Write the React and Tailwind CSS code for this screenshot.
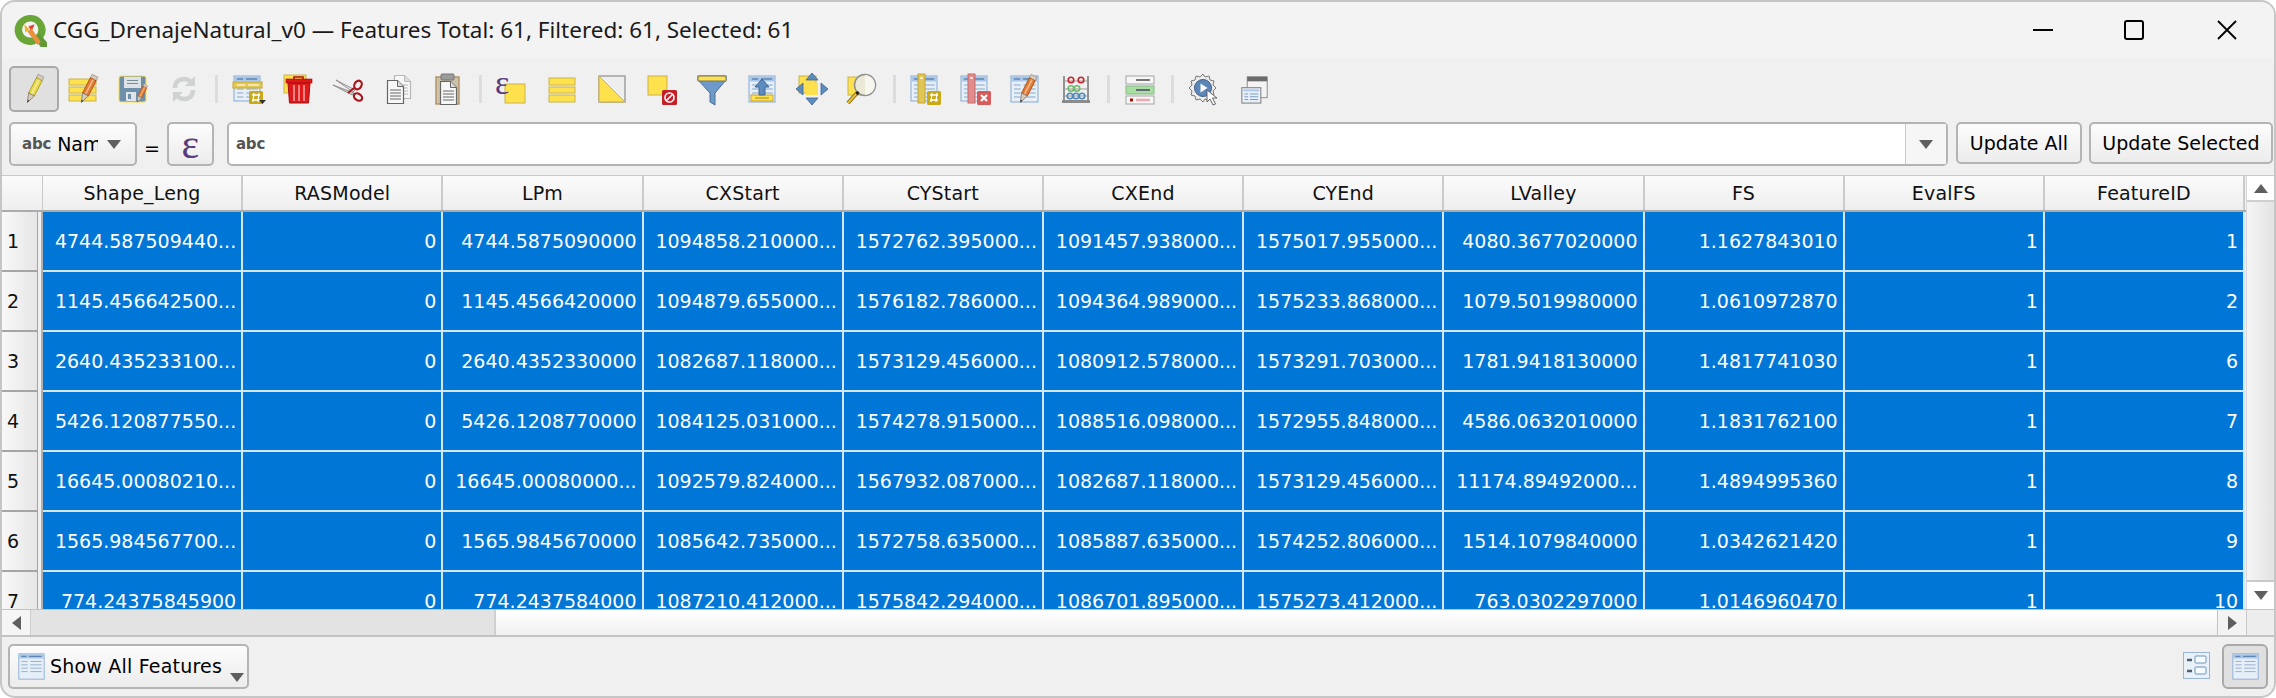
import React from 'react';

const COLUMNS = ['Shape_Leng', 'RASModel', 'LPm', 'CXStart', 'CYStart', 'CXEnd', 'CYEnd', 'LValley', 'FS', 'EvalFS', 'FeatureID'];

const ROWS = [
  ['4744.587509440...', '0', '4744.5875090000', '1094858.210000...', '1572762.395000...', '1091457.938000...', '1575017.955000...', '4080.3677020000', '1.1627843010', '1', '1'],
  ['1145.456642500...', '0', '1145.4566420000', '1094879.655000...', '1576182.786000...', '1094364.989000...', '1575233.868000...', '1079.5019980000', '1.0610972870', '1', '2'],
  ['2640.435233100...', '0', '2640.4352330000', '1082687.118000...', '1573129.456000...', '1080912.578000...', '1573291.703000...', '1781.9418130000', '1.4817741030', '1', '6'],
  ['5426.120877550...', '0', '5426.1208770000', '1084125.031000...', '1574278.915000...', '1088516.098000...', '1572955.848000...', '4586.0632010000', '1.1831762100', '1', '7'],
  ['16645.00080210...', '0', '16645.00080000...', '1092579.824000...', '1567932.087000...', '1082687.118000...', '1573129.456000...', '11174.89492000...', '1.4894995360', '1', '8'],
  ['1565.984567700...', '0', '1565.9845670000', '1085642.735000...', '1572758.635000...', '1085887.635000...', '1574252.806000...', '1514.1079840000', '1.0342621420', '1', '9'],
  ['774.24375845900', '0', '774.2437584000', '1087210.412000...', '1575842.294000...', '1086701.895000...', '1575273.412000...', '763.0302297000', '1.0146960470', '1', '10'],
];

const Svg = ({ children, size = 32 }) => (
  <svg width={size} height={size} viewBox="0 0 32 32" fill="none" overflow="visible">{children}</svg>
);

const PencilShape = ({ body = '#e8d84a', dark = '#a89a20', x = 0, y = 0, scale = 1 }) => (
  <g transform={`translate(${x} ${y}) scale(${scale}) rotate(27 16 16)`}>
    <rect x="13" y="1" width="6.5" height="4" fill="#d9c9b8" stroke="#8a8a8a" strokeWidth=".6" />
    <rect x="13" y="5" width="6.5" height="17" fill={body} stroke={dark} strokeWidth=".8" />
    <rect x="15.4" y="5" width="1.6" height="17" fill="#fff" opacity=".45" />
    <path d="M13 22h6.5L16.2 31z" fill="#d8cbb5" stroke="#777" strokeWidth=".7" />
    <path d="M15.3 28.5h1.9l-1 2.5z" fill="#333" />
  </g>
);

const YellowBox = ({ x, y, w, h }) => (
  <rect x={x} y={y} width={w} height={h} fill="#ffe14e" stroke="#c8b34d" strokeWidth="1" />
);

const TableShape = ({ x = 3, y = 3, w = 25, h = 26 }) => (
  <g>
    <rect x={x} y={y} width={w} height={h} fill="#e6eff8" stroke="#86a9d0" strokeWidth="1" />
    <rect x={x + 0.5} y={y + 0.5} width={w - 1} height={5} fill="#a9c6e6" />
    <path d={`M${x + 3} ${y + 3}h6M${x + 12} ${y + 3}h${w - 15}`} stroke="#5d86b5" strokeWidth="1.4" />
    {[9, 13, 17, 21].map((d) => (
      <path key={d} d={`M${x + 3} ${y + d}h${w * 0.25}M${x + 3 + w * 0.35} ${y + d}h${w * 0.45}`} stroke="#8aa9c9" strokeWidth="1" />
    ))}
  </g>
);

const ToggleEdit = () => (
  <Svg>
    <PencilShape x={0} y={0} />
  </Svg>
);

const MultiEdit = () => (
  <Svg>
    <YellowBox x={1} y={6} w={27} h={6} />
    <YellowBox x={1} y={14} w={27} h={6} />
    <YellowBox x={1} y={22} w={27} h={6} />
    <PencilShape body="#e47b32" dark="#a64e14" x={4} y={0} />
  </Svg>
);

const SaveEdits = () => (
  <Svg>
    <rect x="1" y="3" width="27" height="26" rx="2" fill="#6d8fa9" stroke="#ffe14e" strokeWidth="1" />
    <rect x="6" y="4" width="17" height="11" fill="#dde2e6" />
    <path d="M9 7.5h11M9 10.5h11" stroke="#7a8a96" strokeWidth="1.2" />
    <rect x="8" y="19" width="10" height="9" fill="#dfe4e8" />
    <rect x="10" y="21" width="3" height="5" fill="#6d8fa9" />
    <PencilShape body="#e47b32" dark="#a64e14" x={13} y={10} scale={0.65} />
  </Svg>
);

const Reload = () => (
  <Svg>
    <g stroke="#cfd2d2" strokeWidth="4.5" fill="none">
      <path d="M7 15c0-6 4-9 9-9 3 0 5 1 7 3" />
      <path d="M25 17c0 6-4 9-9 9-3 0-5-1-7-3" />
    </g>
    <path d="M27 3v10H17z" fill="#cfd2d2" />
    <path d="M5 29V19h10z" fill="#cfd2d2" />
  </Svg>
);

const AddFeature = () => (
  <Svg>
    <TableShape x={2} y={3} w={26} h={25} />
    <rect x={1} y={9} width={29} height={6} fill="#e5c955" stroke="#c2a534" strokeWidth="1" />
    <path d="M5 12h8M16 12h11" stroke="#fff" strokeWidth="1.2" />
    <rect x="17" y="18" width="14" height="13" rx="1.5" fill="#c8a91a" />
    <path d="M20 22h8M20 27h8M22 20l-1 9M27 20l-1 9" stroke="#fff" strokeWidth="1.3" />
    <path d="M27 27h7l-3.500 4z" fill="#333" />
  </Svg>
);

const Trash = () => (
  <Svg>
    <rect x="2" y="2" width="22" height="18" fill="#ffe14e" stroke="#c8b34d" />
    <path d="M12 4h9v3h-9z" stroke="#b01010" strokeWidth="1.6" />
    <rect x="4" y="6" width="26" height="4" fill="#e21616" stroke="#a50f0f" strokeWidth=".6" />
    <path d="M6 10h22l-1.500 20H7.500z" fill="#e0191b" stroke="#a50f0f" />
    <path d="M12 12v16M17 12v16M22 12v16" stroke="#f2a0a0" strokeWidth="1.600" />
  </Svg>
);

const Scissors = () => (
  <Svg>
    <path d="M1 12l21 8-2 2z" fill="#cfcfcf" stroke="#7f7f7f" strokeWidth=".8" />
    <path d="M4 7l17 12 2-2z" fill="#e6e6e6" stroke="#7f7f7f" strokeWidth=".8" />
    <ellipse cx="26" cy="12" rx="3.500" ry="4.500" stroke="#a8161c" strokeWidth="2.200" transform="rotate(30 26 12)" />
    <ellipse cx="26" cy="24" rx="4.500" ry="3.200" stroke="#a8161c" strokeWidth="2.200" transform="rotate(35 26 24)" />
    <path d="M16 20l6-5" stroke="#a8161c" strokeWidth="2" />
  </Svg>
);

const PageShape = ({ x, y, stroke = '#666', fill = '#f7f7f7' }) => (
  <g transform={`translate(${x} ${y})`}>
    <path d="M.5.5h10l6 6v17H.5z" fill={fill} stroke={stroke} strokeWidth="1.200" />
    <path d="M10.500.5v6h6" fill="#ddd" stroke={stroke} strokeWidth="1" />
    <path d="M3 10h11M3 13h11M3 16h11M3 19h11" stroke={stroke} strokeWidth="1" />
  </g>
);

const Copy = () => (
  <Svg>
    <PageShape x={12} y={2} stroke="#b8b8b8" />
    <PageShape x={5} y={7} />
  </Svg>
);

const Paste = () => (
  <Svg>
    <rect x="4" y="4" width="23" height="27" fill="#cfc2ab" stroke="#b09060" strokeWidth="1.400" />
    <PageShape x={8} y={8} />
    <rect x="9" y="1" width="13" height="6" rx="1" fill="#9a9a9a" stroke="#777" />
  </Svg>
);

const SelectExpr = () => (
  <Svg>
    <YellowBox x={9} y={11} w={20} h={19} />
    <text x="-1" y="21" fontFamily="'Liberation Serif', serif" fontSize="34" fill="#5b3a7e">&#949;</text>
  </Svg>
);

const SelectAll = () => (
  <Svg>
    <YellowBox x={3} y={5} w={26} h={7} />
    <YellowBox x={3} y={14} w={26} h={6} />
    <YellowBox x={3} y={22} w={26} h={7} />
  </Svg>
);

const Invert = () => (
  <Svg>
    <rect x="3" y="3" width="26" height="26" fill="#eeeeee" stroke="#9b9b9b" strokeWidth="1.400" />
    <path d="M3 3l26 26H3z" fill="#ffe14e" stroke="#c8b34d" />
  </Svg>
);

const Deselect = () => (
  <Svg>
    <YellowBox x={2} y={3} w={19} h={19} />
    <rect x="16" y="17" width="15" height="15" rx="1.500" fill="#c4202a" />
    <circle cx="23.500" cy="24.500" r="4.500" stroke="#fff" strokeWidth="1.600" />
    <path d="M20.500 27.500l6-6" stroke="#fff" strokeWidth="1.600" />
  </Svg>
);

const Funnel = () => (
  <Svg>
    <path d="M2 3h28v4L19 20v12l-5-3V20L2 7z" fill="#6d9acb" stroke="#4f6f92" strokeWidth="1" />
    <rect x="2" y="3" width="28" height="5" fill="#ffe14e" stroke="#77745a" strokeWidth="1" />
  </Svg>
);

const MoveTop = () => (
  <Svg>
    <TableShape x={3} y={3} w={26} h={26} />
    <rect x="5" y="22" width="22" height="6" fill="#ffe14e" stroke="#c8a534" />
    <path d="M9 25h14" stroke="#a08b20" strokeWidth="1" />
    <path d="M16 6l7 8h-4v8h-6v-8H9z" fill="#5d8cc0" stroke="#3f6690" />
  </Svg>
);

const PanSelected = () => (
  <Svg>
    <YellowBox x={3} y={3} w={17} h={17} />
    <rect x="10" y="10" width="12" height="12" fill="#ffe14e" />
    <g fill="#5d8cc0" stroke="#3f6690" strokeWidth=".8">
      <path d="M16 0l6 7h-12z" />
      <path d="M16 32l6-7h-12z" />
      <path d="M0 16l7-6v12z" />
      <path d="M32 16l-7-6v12z" />
    </g>
  </Svg>
);

const ZoomSelected = () => (
  <Svg>
    <YellowBox x={2} y={4} w={17} h={18} />
    <circle cx="19" cy="12" r="10.500" fill="#ece8d6" stroke="#8f8f8f" strokeWidth="1.500" />
    <path d="M19 2a10 10 0 0 1 0 20z" fill="#f7f6ef" />
    <path d="M11 20L2 30" stroke="#8a6f12" strokeWidth="4" />
    <path d="M11 20L2 30" stroke="#e5be3b" strokeWidth="2" />
    <circle cx="11.500" cy="20" r="1.800" fill="#222" />
  </Svg>
);

const NewField = () => (
  <Svg>
    <TableShape x={1} y={3} w={26} h={25} />
    <rect x="8" y="1" width="7" height="29" fill="#e0c656" stroke="#c2a534" />
    <rect x="10.500" y="4" width="2" height="2" fill="#fff" />
    <rect x="17" y="18" width="14" height="14" rx="1.500" fill="#c8a91a" />
    <path d="M20 22h8M20 27h8M22 20l-1 9M27 20l-1 9" stroke="#fff" strokeWidth="1.300" />
  </Svg>
);

const DeleteField = () => (
  <Svg>
    <TableShape x={1} y={3} w={26} h={25} />
    <rect x="8" y="1" width="7" height="29" fill="#e28b8b" stroke="#c46a6a" />
    <rect x="10.500" y="4" width="2" height="2" fill="#fff" />
    <rect x="17" y="18" width="14" height="14" rx="1.500" fill="#d65c5c" />
    <path d="M21 22l6 6M27 22l-6 6" stroke="#fff" strokeWidth="2.200" />
  </Svg>
);

const EditTable = () => (
  <Svg>
    <TableShape x={1} y={3} w={27} h={26} />
    <PencilShape body="#e47b32" dark="#a64e14" x={1} y={0} />
  </Svg>
);

const Abacus = () => (
  <Svg>
    <path d="M4 3v25M28 3v25" stroke="#555" strokeWidth="1.200" />
    <rect x="2" y="27" width="28" height="3" fill="#8c8c8c" />
    <path d="M4 8h24M4 16h24M4 23h24" stroke="#999" strokeWidth="1" />
    <circle cx="11" cy="7" r="2.800" stroke="#c8242b" strokeWidth="1.600" />
    <circle cx="21" cy="7" r="2.800" stroke="#c8242b" strokeWidth="1.600" />
    <circle cx="11" cy="15.500" r="2.800" stroke="#6fb86b" strokeWidth="1.600" />
    <circle cx="17" cy="15.500" r="2.800" stroke="#6fb86b" strokeWidth="1.600" />
    <circle cx="10" cy="23" r="2.800" stroke="#4f89bb" strokeWidth="1.600" />
    <circle cx="16" cy="23" r="2.800" stroke="#4f89bb" strokeWidth="1.600" />
    <circle cx="22" cy="23" r="2.800" stroke="#4f89bb" strokeWidth="1.600" />
  </Svg>
);

const Conditional = () => (
  <Svg>
    <rect x="2" y="3" width="28" height="8" fill="#f6f6f6" stroke="#a5a5a5" />
    <path d="M12 7h14" stroke="#777" strokeWidth="2.200" />
    <rect x="2" y="13" width="28" height="8" fill="#a8e0a4" stroke="#8ab587" />
    <path d="M12 17h14" stroke="#667" strokeWidth="2.200" />
    <rect x="2" y="23" width="28" height="8" fill="#f6f6f6" stroke="#a5a5a5" />
    <rect x="6" y="25.500" width="3" height="3" fill="#a01010" />
    <path d="M12 27h14" stroke="#f0a8b4" strokeWidth="2.600" />
  </Svg>
);

const Actions = () => (
  <Svg>
    <path d="M15 1l2 3 4-1 1 4 4 1-1 4 3 3-3 3 1 4-4 1-1 4-4-1-2 3-3-3-4 1-1-4-4-1 1-4-3-3 3-3-1-4 4-1 1-4 4 1z" fill="#ededed" stroke="#777" strokeWidth="1" />
    <circle cx="15" cy="15" r="8.500" fill="#5d87b9" stroke="#3d5f88" />
    <path d="M12.500 10.500l7 4.500-7 4.500z" fill="#fff" />
    <path d="M19 17l0 12 3-3 3 6 2.500-1-3-6h4.500z" fill="#fff" stroke="#555" strokeWidth=".9" />
  </Svg>
);

const DockWindow = () => (
  <Svg size={29}>
    <rect x="8" y="2" width="22" height="23" fill="#f4f4f4" stroke="#858585" />
    <rect x="8" y="2" width="22" height="5" fill="#6b6b6b" />
    <rect x="2" y="14" width="21" height="17" fill="#e6eff8" stroke="#858585" strokeWidth="1.200" />
    <path d="M4 17h17" stroke="#a9c6e6" strokeWidth="2" />
    <path d="M5 21h4M11 21h9M5 24h4M11 24h9M5 27h4M11 27h9" stroke="#7d9fc4" strokeWidth="1.200" />
  </Svg>
);

const FormView = () => (
  <svg width="27" height="27" viewBox="0 0 27 27" fill="none">
    <rect x=".5" y=".5" width="26" height="26" fill="#e8f0f8" stroke="#9ab6d4" />
    <path d="M4 8h5M4 19h5" stroke="#4f5f70" strokeWidth="2.400" />
    <rect x="12" y="4" width="11" height="7" rx="1" fill="#f6fbff" stroke="#6a92bd" />
    <rect x="12" y="15" width="11" height="7" rx="1" fill="#f6fbff" stroke="#6a92bd" />
  </svg>
);

const GridIcon = ({ size = 27 }) => (
  <Svg size={size}>
    <TableShape x={1} y={1} w={30} h={30} />
  </Svg>
);

const QgisLogo = () => (
  <svg width="33" height="33" viewBox="0 0 32 32" fill="none">
    <path d="M15 1a14.500 14.500 0 1 0 7.500 27l-4.500-5.500a7.800 7.800 0 1 1 4.800-4.300l5 5.800A14.500 14.500 0 0 0 15 1z" fill="#6aa637" />
    <path d="M19 23l4.500-5 8.500 9.500V32h-6z" fill="#5f9a34" />
    <path d="M10 10l5 5-4 3z" fill="#f0b429" />
    <path d="M14 12l6-2-3 7z" fill="#d9462f" />
    <path d="M13 17l4-3 9 13-3 3z" fill="#e8913a" />
  </svg>
);

const Triangle = ({ dir = 'down', className = '' }) => {
  const pts = { down: '0,0 14,0 7,9', up: '0,9 14,9 7,0', left: '9,0 9,14 0,7', right: '0,0 0,14 9,7' }[dir];
  const box = dir === 'down' || dir === 'up' ? [14, 9] : [9, 14];
  return (
    <svg width={box[0]} height={box[1]} viewBox={`0 0 ${box[0]} ${box[1]}`} className={className}>
      <polygon points={pts} fill="#5f5f5f" />
    </svg>
  );
};

const ToolBtn = ({ active, children }) => (
  <div className={`flex h-[46px] w-[50px] shrink-0 items-center justify-center rounded-[5px] ${active ? 'border-2 border-[#a9a9a9] bg-[#e0e0e0]' : ''}`}>
    {children}
  </div>
);

const Sep = () => <div className="mx-[5.5px] h-[28px] w-[3px] shrink-0 bg-[#dcdcdc]" />;

const AbcLabel = () => (
  <span className="text-[15px] font-bold leading-none tracking-[-0.2px] text-[#555]">abc</span>
);

const formBtn = 'rounded-[5px] border-2 border-[#b4b4b4] bg-gradient-to-b from-[#fcfcfc] to-[#ececec]';

export default function App() {
  return (
    <div className="h-[698px] w-[2276px] bg-white font-['DejaVu_Sans',sans-serif] text-black">
      <div className="flex h-full w-full flex-col overflow-hidden rounded-[15px] border-2 border-[#c6c6c6] bg-[#f0f0f0]">
        {/* title bar */}
        <div className="flex h-[56px] shrink-0 items-center bg-[#f3f3f3] pl-[12px]">
          <QgisLogo />
          <span className="ml-[6px] font-['Noto_Sans',sans-serif] text-[22.5px] text-[#1a1a1a]">
            CGG_DrenajeNatural_v0 — Features Total: 61, Filtered: 61, Selected: 61
          </span>
          <div className="ml-auto flex items-center pr-[37px]">
            <div className="h-[2px] w-[20px] bg-black" />
            <div className="ml-[71px] h-[20px] w-[20px] rounded-[3px] border-2 border-black" />
            <svg className="ml-[73px]" width="20" height="20" viewBox="0 0 20 20">
              <path d="M1 1l18 18M19 1L1 19" stroke="#000" strokeWidth="1.800" />
            </svg>
          </div>
        </div>

        {/* toolbar */}
        <div className="flex h-[62px] shrink-0 items-center pl-[7px]">
          <ToolBtn active><ToggleEdit /></ToolBtn>
          <ToolBtn><MultiEdit /></ToolBtn>
          <ToolBtn><SaveEdits /></ToolBtn>
          <ToolBtn><Reload /></ToolBtn>
          <Sep />
          <ToolBtn><AddFeature /></ToolBtn>
          <ToolBtn><Trash /></ToolBtn>
          <ToolBtn><Scissors /></ToolBtn>
          <ToolBtn><Copy /></ToolBtn>
          <ToolBtn><Paste /></ToolBtn>
          <Sep />
          <ToolBtn><SelectExpr /></ToolBtn>
          <ToolBtn><SelectAll /></ToolBtn>
          <ToolBtn><Invert /></ToolBtn>
          <ToolBtn><Deselect /></ToolBtn>
          <ToolBtn><Funnel /></ToolBtn>
          <ToolBtn><MoveTop /></ToolBtn>
          <ToolBtn><PanSelected /></ToolBtn>
          <ToolBtn><ZoomSelected /></ToolBtn>
          <Sep />
          <ToolBtn><NewField /></ToolBtn>
          <ToolBtn><DeleteField /></ToolBtn>
          <ToolBtn><EditTable /></ToolBtn>
          <ToolBtn><Abacus /></ToolBtn>
          <Sep />
          <ToolBtn><Conditional /></ToolBtn>
          <Sep />
          <ToolBtn><Actions /></ToolBtn>
          <ToolBtn><DockWindow /></ToolBtn>
        </div>

        {/* field calculator bar */}
        <div className="flex h-[55px] shrink-0 items-start pl-[7px] pt-[2px]">
          <div className={`flex h-[44px] w-[128px] items-center pl-[11px] ${formBtn}`}>
            <AbcLabel />
            <span className="ml-[6px] w-[41px] overflow-hidden text-[19px]">Name</span>
            <Triangle dir="down" className="ml-[9px]" />
          </div>
          <span className="mx-[7px] self-center text-[19px] leading-none">=</span>
          <div className={`flex h-[44px] w-[47px] items-center justify-center ${formBtn}`}>
            <span className="font-['Liberation_Serif',serif] text-[42px] leading-none text-[#5b3a7e]">&#949;</span>
          </div>
          <div className="ml-[13px] flex h-[44px] w-[1721px] items-center rounded-[5px] border-2 border-[#b4b4b4] bg-white pl-[7px]">
            <AbcLabel />
            <div className="ml-auto flex h-full w-[41px] items-center justify-center border-l border-[#c8c8c8] bg-[#f6f6f6]">
              <Triangle dir="down" />
            </div>
          </div>
          <div className={`ml-[8px] flex h-[42px] w-[126px] items-center justify-center text-[19px] ${formBtn}`}>
            Update All
          </div>
          <div className={`ml-[7px] flex h-[42px] w-[184px] items-center justify-center text-[19px] ${formBtn}`}>
            Update Selected
          </div>
        </div>

        {/* attribute table */}
        <div className="flex h-[434px] shrink-0 border-t border-[#c9c9c9]">
          <div className="flex min-w-0 flex-1 flex-col overflow-hidden">
            <div className="flex h-[36px] shrink-0 border-b-2 border-[#ababab]">
              <div className="w-[41px] shrink-0 border-r border-[#c9c9c9] bg-gradient-to-b from-[#fbfbfb] to-[#eeeeee]" />
              {COLUMNS.map((col) => (
                <div key={col} className="flex w-[200.2px] shrink-0 items-center justify-center border-r-2 border-[#cbcbcb] bg-gradient-to-b from-[#fbfbfb] to-[#eeeeee] pt-[1px] text-[19px] tracking-[0.2px] text-[#111]">
                  {col}
                </div>
              ))}
            </div>
            {ROWS.map((row, i) => (
              <div key={i} className="flex h-[60px] shrink-0">
                <div className="flex w-[36px] shrink-0 items-center border-b-2 border-r border-[#a5a5a5] bg-gradient-to-r from-[#f8f8f8] to-[#e6e6e6] pl-[5px] text-[19px] text-[#111]">
                  {i + 1}
                </div>
                <div className="w-[5px] shrink-0 border-r-2 border-[#b0b0b0] bg-[#f0f0f0]" />
                {row.map((val, j) => (
                  <div key={j} className="flex w-[200.2px] shrink-0 items-center justify-end border-b-2 border-r-2 border-[#d5e6f5] bg-[#0076d6] pr-[5px] text-[19px] text-white">
                    {val}
                  </div>
                ))}
              </div>
            ))}
          </div>
          {/* vertical scrollbar */}
          <div className="flex w-[28px] shrink-0 flex-col border-l border-[#d8d8d8] bg-[#ededed]">
            <div className="flex h-[26px] items-center justify-center border-b-2 border-[#cfcfcf] bg-white">
              <Triangle dir="up" />
            </div>
            <div className="flex-1 border-b-2 border-[#c9c9c9] bg-gradient-to-r from-[#f5f5f5] to-[#e3e3e3]" />
            <div className="flex h-[27px] items-center justify-center bg-white">
              <Triangle dir="down" />
            </div>
          </div>
        </div>

        {/* horizontal scrollbar */}
        <div className="flex h-[28px] shrink-0 border-b-2 border-t border-[#c3c3c3]">
          <div className="flex w-[28px] items-center justify-center bg-[#f5f5f5]">
            <Triangle dir="left" />
          </div>
          <div className="w-[466px] border-l border-r-2 border-[#cfcfcf] bg-[#e3e3e3]" />
          <div className="flex-1 bg-gradient-to-b from-white to-[#f0f0f0]" />
          <div className="flex w-[29px] items-center justify-center border-l border-[#c3c3c3] bg-[#f3f3f3]">
            <Triangle dir="right" />
          </div>
          <div className="w-[28px] border-l border-[#c9c9c9] bg-[#ededed]" />
        </div>

        {/* footer */}
        <div className="flex flex-1 items-start px-[6px] pt-[7px]">
          <div className={`relative flex h-[45px] w-[241px] items-center pl-[8px] text-[19px] tracking-[0.2px] ${formBtn}`}>
            <GridIcon />
            <span className="ml-[5px]">Show All Features</span>
            <Triangle dir="down" className="absolute bottom-[5px] right-[3px]" />
          </div>
          <div className="ml-auto mr-[12px] mt-[8px]"><FormView /></div>
          <div className="flex h-[45px] w-[46px] items-center justify-center rounded-[6px] border-2 border-[#a9a9a9] bg-[#e0e0e0]">
            <GridIcon />
          </div>
        </div>
      </div>
    </div>
  );
}
